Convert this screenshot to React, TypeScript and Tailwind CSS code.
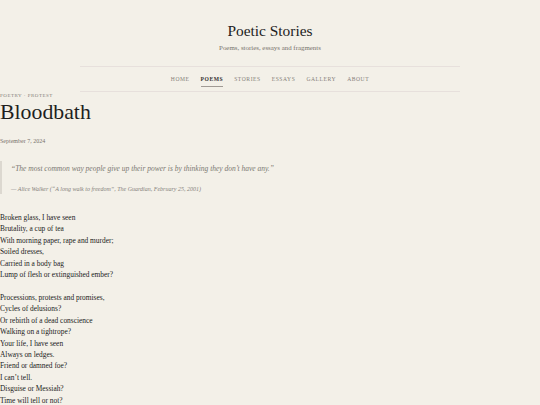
const navItems = [
  { label: 'Home', active: false },
  { label: 'Poems', active: true },
  { label: 'Stories', active: false },
  { label: 'Essays', active: false },
  { label: 'Gallery', active: false },
  { label: 'About', active: false },
];

const stanzas = [
  [
    'Broken glass, I have seen',
    'Brutality, a cup of tea',
    'With morning paper, rape and murder;',
    'Soiled dresses,',
    'Carried in a body bag',
    'Lump of flesh or extinguished ember?',
  ],
  [
    'Processions, protests and promises,',
    'Cycles of delusions?',
    'Or rebirth of a dead conscience',
    'Walking on a tightrope?',
    'Your life, I have seen',
    'Always on ledges.',
    'Friend or damned foe?',
    'I can\u2019t tell.',
    'Disguise or Messiah?',
    'Time will tell or not?',
  ],
];

export default function App() {
  return (
    <div className="min-h-screen bg-[#f3f0e8] font-['Liberation_Serif','Times_New_Roman',serif] text-[#222]">
      {/* Site header */}
      <header className="pt-[22px] text-center">
        <h1 className="text-[15.4px] leading-[18px] text-[#222]">Poetic Stories</h1>
        <p className="mt-[3px] text-[6.9px] leading-[10px] text-[#77726c]">Poems, stories, essays and fragments</p>
        <nav className="mx-auto mt-[13px] w-[380px] border-y border-[#e7e0dc] pt-[9px] pb-[4px]">
          <ul className="flex items-start justify-center gap-[11px]">
            {navItems.map((item) => (
              <li key={item.label} className="flex flex-col items-stretch">
                <span
                  className={`text-[5.6px] leading-[6px] uppercase tracking-[0.1em] ${
                    item.active ? 'font-bold text-[#333]' : 'text-[#857f79]'
                  }`}
                >
                  {item.label}
                </span>
                {item.active ? (
                  <span className="mt-[4px] h-px bg-[#a09a94]" />
                ) : (
                  <span className="mt-[4px] h-px" />
                )}
              </li>
            ))}
          </ul>
        </nav>
      </header>

      {/* Article */}
      <article>
        <p className="text-[5px] leading-[7px] uppercase tracking-[0.1em] text-[#857f79]">Poetry · Protest</p>
        <h2 className="text-[21.8px] leading-[26px] text-[#1e1e1e]">Bloodbath</h2>
        <p className="mt-[11.5px] text-[6px] leading-[9px] text-[#77726c]">September 7, 2024</p>

        <blockquote className="mt-[15px] border-l-2 border-[#dcd8d0] pl-[9px] pt-[2px]">
          <p className="text-[7.5px] leading-[11px] italic text-[#7b7872]">
            “The most common way people give up their power is by thinking they don’t have any.”
          </p>
          <p className="mt-[11px] text-[6px] leading-[9px] italic text-[#86827c]">
            — Alice Walker (“A long walk to freedom”, The Guardian, February 25, 2001)
          </p>
        </blockquote>

        <div className="mt-[18.5px] flex flex-col gap-[11.5px]">
          {stanzas.map((lines, i) => (
            <p key={i} className="text-[7.4px] leading-[11.4px] text-[#222]">
              {lines.map((line) => (
                <span key={line} className="block">
                  {line}
                </span>
              ))}
            </p>
          ))}
        </div>
      </article>
    </div>
  );
}
